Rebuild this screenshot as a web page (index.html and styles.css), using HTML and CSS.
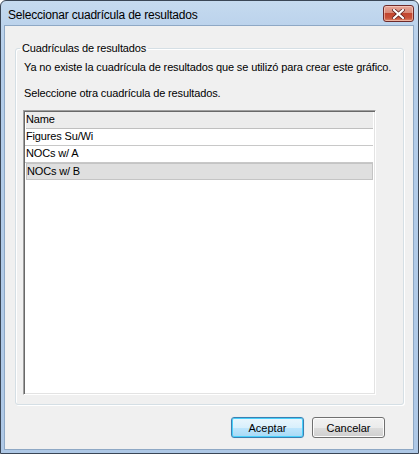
FILE: index.html
```html
<!DOCTYPE html>
<html>
<head>
<meta charset="utf-8">
<link rel="stylesheet" href="styles.css">
</head>
<body>
<div class="window">
  <div class="titlebar">
    <span class="title">Seleccionar cuadrícula de resultados</span>
    <button class="close" aria-label="Cerrar">
      <svg width="13" height="10" viewBox="0 0 13 10"><path d="M2 1 L11 9 M11 1 L2 9" stroke="#5a1d1d" stroke-width="3.6" stroke-linecap="square"/><path d="M2 1 L11 9 M11 1 L2 9" stroke="#fff" stroke-width="2.2" stroke-linecap="square"/></svg>
    </button>
  </div>
  <div class="client">
    <fieldset class="group">
      <legend class="legend">Cuadrículas de resultados</legend>
      <p class="msg">Ya no existe la cuadrícula de resultados que se utilizó para crear este gráfico.</p>
      <p class="msg msg2">Seleccione otra cuadrícula de resultados.</p>
      <div class="list">
        <div class="row header">Name</div>
        <div class="row">Figures Su/Wi</div>
        <div class="row">NOCs w/ A</div>
        <div class="row selected">NOCs w/ B</div>
      </div>
    </fieldset>
    <div class="buttons">
      <button class="btn default">Aceptar</button>
      <button class="btn">Cancelar</button>
    </div>
  </div>
</div>
</body>
</html>
```
FILE: styles.css
```css
html, body {
  margin: 0;
  padding: 0;
  background: #ffffff;
}
body {
  font-family: "Liberation Sans", Arial, sans-serif;
  font-size: 11px;
  color: #000;
}
.window {
  width: 419px;
  height: 454px;
  box-sizing: border-box;
  border: 1px solid #3a4656;
  border-radius: 6px 6px 0 0;
  background: linear-gradient(to bottom, #c5daef 0px, #bcd3ec 24px, #b4cde9 60px, #aec8e6 100%);
  padding: 0 4px 3px 3px;
  display: flex;
  flex-direction: column;
}
.titlebar {
  height: 24px;
  display: flex;
  align-items: flex-start;
  justify-content: space-between;
  padding-left: 4px;
  flex: none;
}
.title {
  font-size: 12px;
  color: #000;
  line-height: 14px;
  margin-top: 7px;
  letter-spacing: -0.2px;
  white-space: nowrap;
}
.close {
  margin-top: 4px;
  width: 31px;
  height: 17px;
  border: 1px solid #6d2a2a;
  border-radius: 3px;
  background: linear-gradient(to bottom, #e7a597 0%, #d88a78 45%, #c2452f 50%, #c9523a 80%, #dd8a6e 100%);
  box-shadow: inset 0 0 0 1px rgba(255, 220, 210, 0.55);
  padding: 0;
  display: flex;
  align-items: center;
  justify-content: center;
}
.client {
  flex: 1;
  background: #f0f0f0;
  border: 1px solid #8ea8c5;
  display: flex;
  flex-direction: column;
  padding: 16px 9px 0 10px;
}
.group {
  margin: 0;
  border: 1px solid #d5dfe5;
  border-radius: 3px;
  box-shadow: inset 1px 1px 0 #fff, 1px 1px 0 #fff;
  padding: 0 27px 9px 7px;
  box-sizing: border-box;
  min-width: 0;
}
.legend {
  padding: 0 2px;
  margin-left: -3px;
  line-height: 13px;
  letter-spacing: -0.15px;
}
.msg {
  margin: 6px 0 0 1px;
  line-height: 13px;
  white-space: nowrap;
  letter-spacing: -0.13px;
}
.msg2 {
  margin-top: 13px;
}
.list {
  margin-top: 10px;
  height: 285px;
  box-sizing: border-box;
  background: #fff;
  border-style: solid;
  border-width: 1px;
  border-color: #a0a0a0 #ffffff #ffffff #a0a0a0;
  box-shadow: inset 1px 1px 0 #696969, inset -1px -1px 0 #e3e3e3;
  padding: 1px 2px 2px 1px;
}
.row {
  height: 17px;
  line-height: 15px;
  padding-left: 1px;
  border-bottom: 1px solid #c8c8c8;
  box-sizing: border-box;
  letter-spacing: -0.15px;
}
.header {
  background: #ececec;
  border-bottom: 1px solid #bfbfbf;
  margin-left: 1px;
  padding-left: 0;
}
.selected {
  background: #dfdfdf;
  border: 1px solid #c4c4c4;
  padding-left: 0;
  line-height: 14px;
  margin-left: 1px;
}
.buttons {
  display: flex;
  justify-content: flex-end;
  gap: 8px;
  padding: 12px 19px 0 0;
}
.btn {
  width: 73px;
  height: 21px;
  font-family: "Liberation Sans", Arial, sans-serif;
  font-size: 11px;
  color: #000;
  border: 1px solid #707070;
  border-radius: 3px;
  background: linear-gradient(to bottom, #f2f2f2 0%, #ebebeb 50%, #dddddd 51%, #cfcfcf 100%);
  box-shadow: inset 0 0 0 1px #fcfcfc;
  padding: 0;
}
.default {
  border-color: #3c7fb1;
  background: linear-gradient(to bottom, #eaf6fd 0%, #d9f0fc 50%, #bee6fd 51%, #a7d9f5 100%);
  box-shadow: inset 0 0 0 1px #48d0fb, 0 0 1px #9fd8f8;
}
```
